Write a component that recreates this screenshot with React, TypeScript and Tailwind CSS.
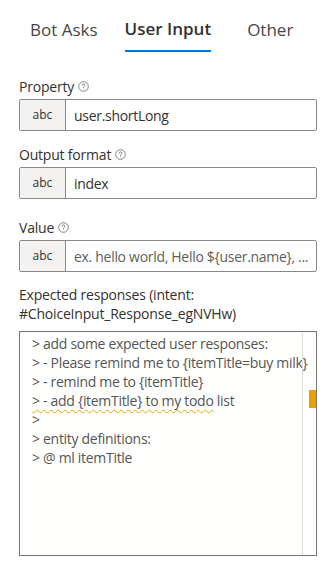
import React from "react";

const FONT = { fontFamily: '"Open Sans", "Noto Sans", sans-serif' };

function HelpIcon() {
  return (
    <svg width="11" height="11" viewBox="0 0 16 16" fill="none" stroke="#605e5c" strokeWidth="1.1" className="ml-[4px] inline-block">
      <circle cx="8" cy="8" r="7" />
      <path d="M6 6.2a2 2 0 1 1 2.8 1.8c-.5.3-.8.7-.8 1.3v.6" strokeLinecap="round" />
      <circle cx="8" cy="11.8" r="0.5" fill="#605e5c" stroke="none" />
    </svg>
  );
}

function Field({ label, value, placeholder, top }: { label: string; value?: string; placeholder?: string; top: string }) {
  return (
    <div className={top}>
      <div className="flex items-center h-[20px] text-[14px] tracking-[-0.2px] text-[#323130] mb-[3px]">
        {label}
        <HelpIcon />
      </div>
      <div className="flex h-[32px] border border-[#8a8886] rounded-[2px]">
        <div className="w-[46px] shrink-0 flex items-center justify-center bg-[#f3f2f1] border-r border-[#8a8886] text-[12px] text-[#323130]">
          abc
        </div>
        <div className={`flex items-center px-[8px] text-[14px] tracking-[-0.3px] whitespace-nowrap overflow-hidden ${value ? "text-[#323130]" : "text-[#605e5c]"}`}>
          {value ?? placeholder}
        </div>
      </div>
    </div>
  );
}

const lines = [
  "> add some expected user responses:",
  "> - Please remind me to {itemTitle=buy milk}",
  "> - remind me to {itemTitle}",
  "WAVY",
  ">",
  "> entity definitions:",
  "> @ ml itemTitle",
];

export default function App() {
  return (
    <div className="w-[326px] h-[563px] bg-white overflow-hidden" style={FONT}>
      <div className="flex items-end h-[52px] pl-[30px] text-[17px]">
        <div className="text-[#484644] pb-[10px] mr-[27px]">Bot Asks</div>
        <div className="font-semibold text-[#323130] pb-[9px] border-b-2 border-[#0078d4] mr-[36px]">User Input</div>
        <div className="text-[#484644] pb-[10px]">Other</div>
      </div>
      <div className="pl-[19px] pr-[9px] pt-[24px]">
        <Field top="" label="Property" value="user.shortLong" />
        <Field top="mt-[13px]" label="Output format" value="index" />
        <Field top="mt-[18px]" label="Value" placeholder="ex. hello world, Hello ${user.name}, ..." />
        <div className="text-[14px] leading-[19px] tracking-[-0.2px] text-[#323130] mt-[13px] mb-[8px]">
          Expected responses (intent:
          <br />
          #ChoiceInput_Response_egNVHw)
        </div>
        <div className="relative h-[225px] border border-[#767676] bg-[#fffffe]">
          <div className="pl-[12px] pt-[2px] text-[14px] leading-[19px] tracking-[-0.3px] text-[#555555]">
            {lines.map((l, i) =>
              l === "WAVY" ? (
                <div key={i} className="whitespace-nowrap">
                  <span className="underline decoration-wavy decoration-[#e5a800] decoration-1 underline-offset-[3px]">
                    {"> - add {itemTitle} to my todo"}
                  </span>{" "}
                  list
                </div>
              ) : (
                <div key={i} className="whitespace-nowrap">{l}</div>
              )
            )}
          </div>
          <div className="absolute top-0 bottom-0 right-[13px] w-[1px] bg-[#dddddd]" />
          <div className="absolute top-[58px] right-0 w-[7px] h-[18px] bg-[#e8a200]" />
        </div>
      </div>
    </div>
  );
}
